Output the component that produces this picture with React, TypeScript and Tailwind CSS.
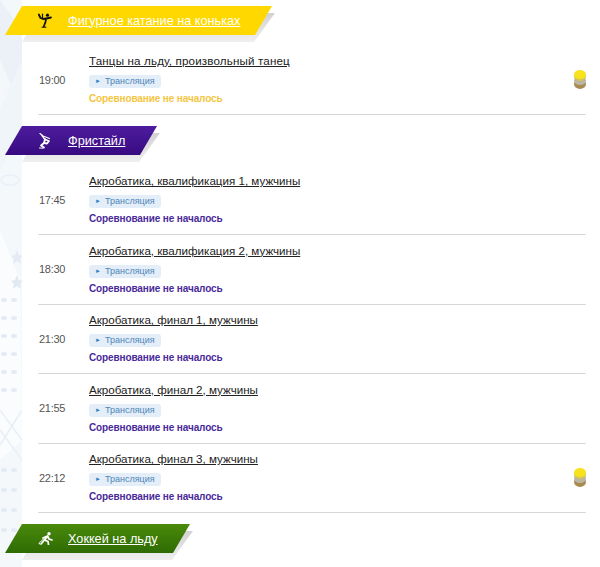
function Coin() {
  return (
    <svg width="12" height="19" viewBox="0 0 12 19" className="shrink-0">
      <ellipse cx="6" cy="14" rx="6" ry="5" fill="#a98a50" />
      <ellipse cx="6" cy="10.5" rx="6" ry="4.5" fill="#bcb6a4" />
      <ellipse cx="6" cy="6.5" rx="6" ry="4.5" fill="#d6c650" />
      <ellipse cx="6" cy="4.5" rx="6" ry="4.5" fill="#f7e21e" />
    </svg>
  );
}

// faint snow ornament of the page background
function Ornament() {
  const dots = [300, 318, 336, 354, 372, 390, 470, 490, 510, 530];
  return (
    <svg width="22" height="567" viewBox="0 0 22 567" className="absolute left-0 top-0">
      <rect width="22" height="567" fill="#f4f8fb" />
      <path d="M0 0 L22 30 L22 110 L0 60 Z" fill="#ebf1f7" />
      <path d="M0 110 L22 60 L22 130 L0 170 Z" fill="#f0f5f9" />
      <ellipse cx="10" cy="180" rx="9" ry="5" fill="none" stroke="#e8eff6" strokeWidth="1.5" />
      <path d="M0 230 L20 280 L22 440 L0 460 Z" fill="#fafcfe" />
      <path d="M17 250 l2 5 4 1-3 3 1 5-4-3-4 3 1-5-3-3 4-1z" fill="#e4ebf4" />
      <path d="M17 275 l2 5 4 1-3 3 1 5-4-3-4 3 1-5-3-3 4-1z" fill="#e1e9f2" />
      {dots.map((y) => (
        <g key={y} fill="#e4ebf4">
          <ellipse cx="4" cy={y} rx="3" ry="2" />
          <ellipse cx="14" cy={y} rx="3" ry="2" />
        </g>
      ))}
      <path d="M0 410 L22 440 M0 430 L22 460 M22 410 L0 445" stroke="#e8eff6" strokeWidth="1.5" />
    </svg>
  );
}

function SkaterIcon() {
  return (
    <svg width="14" height="15" viewBox="0 0 14 15" fill="none" stroke="#111" strokeWidth="1.8" strokeLinecap="round" strokeLinejoin="round">
      <circle cx="9.5" cy="2.2" r="1.6" fill="#111" stroke="none" />
      <path d="M0.8 1.5 L2.5 5 L5 6 L8.5 5.5 L13 4.5" />
      <path d="M4.5 1 L4.5 5" strokeWidth="1.2" />
      <path d="M8 5.5 L7.5 9 L5.8 13.5" />
      <path d="M4 14.2 L8 14.2" strokeWidth="1" />
    </svg>
  );
}

function FreestyleIcon() {
  return (
    <svg width="12" height="16" viewBox="0 0 12 16" fill="none" stroke="#fff" strokeWidth="1.8" strokeLinecap="round" strokeLinejoin="round">
      <path d="M1 0.5 L4 3 L10.5 5.5" strokeWidth="1.2" />
      <path d="M3 2.5 L5.5 6 L7 7" strokeWidth="1.4" />
      <path d="M6 6 L5 10 L2 12.5 L5 14.5" />
      <path d="M6 6.5 L10 8 L8 10.5 L5 10" />
      <path d="M0.5 15 L4 15.2" strokeWidth="1" />
    </svg>
  );
}

function HockeyIcon() {
  return (
    <svg width="15" height="13" viewBox="0 0 15 13" fill="none" stroke="#fff" strokeWidth="1.7" strokeLinecap="round" strokeLinejoin="round">
      <circle cx="11" cy="1.8" r="1.7" fill="#fff" stroke="none" />
      <path d="M5 6 L9.5 4 L11 7 L14 8" />
      <path d="M9.5 4.5 L6.5 8 L10 9.5 L10.5 12.5" />
      <path d="M6.5 8 L3.5 11.5" />
      <path d="M7 5.5 L0.8 11.5 L3 12.3" strokeWidth="1" />
    </svg>
  );
}

function Banner({ title, width, bg, icon }: { title: string; width: string; bg: string; icon: React.ReactNode }) {
  return (
    <div className={`relative h-[29px] ml-[5px] ${width}`}>
      {/* grey shadow behind the ribbon */}
      <div className="absolute left-[17px] top-[7px] right-[-3px] h-[29px] bg-gradient-to-b from-[#d2d2d2] to-[#efefef] [clip-path:polygon(17px_0,100%_0,calc(100%-21px)_100%,0_100%)]" />
      <div className={`absolute inset-0 flex items-center [clip-path:polygon(17px_0,100%_0,calc(100%-17px)_100%,0_100%)] ${bg}`}>
        <div className="w-[63px] flex justify-center pl-[21px] pr-[4px]">{icon}</div>
        <a className="pt-[1px] text-[12.7px] leading-none text-white underline whitespace-nowrap">{title}</a>
      </div>
    </div>
  );
}

function Row({ time, title, titleClass, statusColor, coin }: { time: string; title: string; titleClass?: string; statusColor: string; coin?: boolean }) {
  return (
    <div className="h-[69.5px] ml-[38px] w-[548px] border-b border-[#d8d8d8] flex items-center">
      <div className="w-[51px] pl-[1px] text-[11px] tracking-[-0.3px] text-[#555]">{time}</div>
      <div className="flex-1 flex flex-col items-start pt-[1px] pb-[2px]">
        <a className={`text-[11.6px] leading-[15px] text-[#222] underline whitespace-nowrap ${titleClass ?? ""}`}>{title}</a>
        <div className="mt-[7px] h-[13px] w-[72px] rounded-[3px] bg-[#e3eef8] flex items-center pl-[6px] gap-[4px] text-[9px] text-[#4f86b8]">
          <span className="text-[6px] text-[#2f7fc4]">►</span>
          <span>Трансляция</span>
        </div>
        <div className={`mt-[4px] text-[10px] tracking-[-0.12px] leading-[13px] font-bold ${statusColor}`}>Соревнование не началось</div>
      </div>
      {coin && <Coin />}
    </div>
  );
}

const FREESTYLE = [
  { time: "17:45", title: "Акробатика, квалификация 1, мужчины" },
  { time: "18:30", title: "Акробатика, квалификация 2, мужчины" },
  { time: "21:30", title: "Акробатика, финал 1, мужчины" },
  { time: "21:55", title: "Акробатика, финал 2, мужчины" },
  { time: "22:12", title: "Акробатика, финал 3, мужчины", coin: true },
];

export default function App() {
  return (
    <div className="relative w-[600px] h-[567px] overflow-hidden bg-white font-['Liberation_Sans',Arial,sans-serif]">
      <Ornament />
      <div className="relative pt-[6px]">
        <Banner title="Фигурное катание на коньках" width="w-[267px]" bg="bg-[#ffd800]" icon={<SkaterIcon />} />
        <div className="mt-[10.5px]">
          <Row time="19:00" title="Танцы на льду, произвольный танец" titleClass="tracking-[0.15px]" statusColor="text-[#f4c63f]" coin />
        </div>

        <div className="mt-[11px]">
          <Banner title="Фристайл" width="w-[152px]" bg="bg-gradient-to-b from-[#4d1c9e] to-[#380a80]" icon={<FreestyleIcon />} />
        </div>
        <div className="mt-[10.5px]">
          {FREESTYLE.map((r) => (
            <Row key={r.time} {...r} statusColor="text-[#4a2a9a]" />
          ))}
        </div>

        <div className="mt-[11px]">
          <Banner title="Хоккей на льду" width="w-[185px]" bg="bg-gradient-to-b from-[#4a8a0c] to-[#2f6b04]" icon={<HockeyIcon />} />
        </div>
      </div>
    </div>
  );
}
